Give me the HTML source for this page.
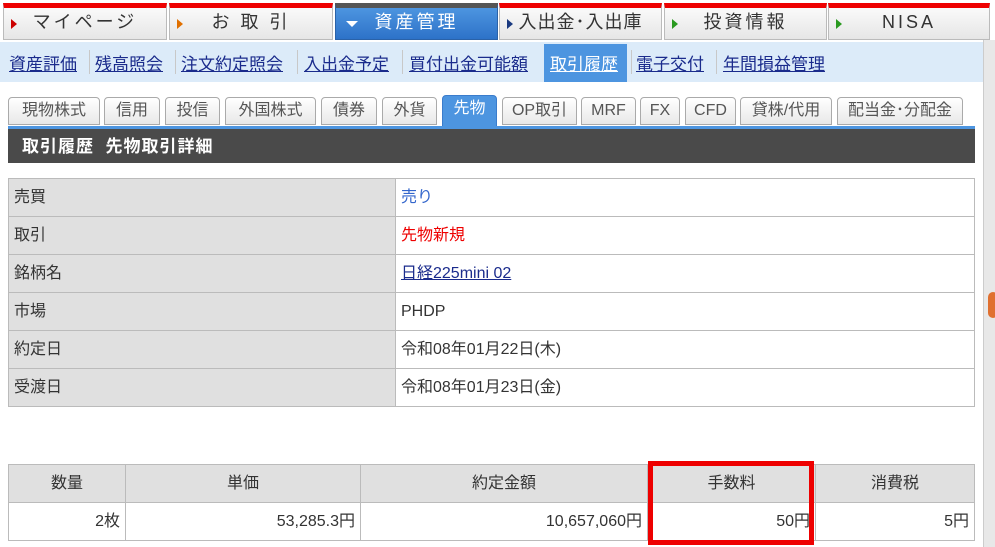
<!DOCTYPE html>
<html><head><meta charset="utf-8"><style>
*{box-sizing:border-box;margin:0;padding:0}
body{width:995px;height:547px;overflow:hidden;background:#fff;font-family:"Liberation Sans","Noto Sans CJK JP",sans-serif;position:relative}
.nav{position:absolute;top:3px;height:37px;border:1px solid #bbb;border-top:5px solid #e00;background:linear-gradient(#fafafa,#e6e6e6);font-size:18px;color:#333;text-align:center;line-height:29px;letter-spacing:3px}
.nav i{position:absolute;left:7px;top:11px;width:0;height:0;border-left:6px solid #c00;border-top:5px solid transparent;border-bottom:5px solid transparent}
.sub{position:absolute;top:42px;left:0;width:983px;height:40px;background:#dcebf9}
.sub a{position:absolute;top:8px;font-size:17px;color:#1a2b8c;text-decoration:underline}
.sep{position:absolute;top:8px;width:1px;height:24px;background:#c8c8c8}
.tab{position:absolute;top:97px;height:28px;border:1px solid #aaa;border-radius:4px 4px 0 0;background:linear-gradient(#fff,#e8e8e8);font-size:16px;color:#555;text-align:center;line-height:26px}
table{position:absolute;border-collapse:collapse;font-size:16px;color:#333}
td{border:1px solid #bbb;height:38px;padding:0 5px;vertical-align:middle;line-height:20px}
.l{background:#e0e0e0}
</style></head><body>
<div class="nav" style="left:3px;width:164px"><i></i>マイページ</div>
<div class="nav" style="left:169px;width:164px"><i style="border-left-color:#e07000"></i>お 取 引</div>
<div class="nav" style="left:335px;width:163px;background:linear-gradient(#4d95e0,#2d72c8);color:#fff;border-color:#2a62a8;border-top-color:#555"><i style="border:6px solid transparent;border-top:6px solid #fff;border-bottom:0;top:13px;left:10px"></i>資産管理</div>
<div class="nav" style="left:499px;width:163px;letter-spacing:1px"><i style="border-left-color:#1a3a80"></i>入出金･入出庫</div>
<div class="nav" style="left:664px;width:163px"><i style="border-left-color:#2a9a20"></i>投資情報</div>
<div class="nav" style="left:828px;width:162px"><i style="border-left-color:#2a9a20"></i>NISA</div>
<div class="sub">
<a style="left:9px">資産評価</a><div class="sep" style="left:89px"></div>
<a style="left:95px">残高照会</a><div class="sep" style="left:175px"></div>
<a style="left:181px">注文約定照会</a><div class="sep" style="left:297px"></div>
<a style="left:304px">入出金予定</a><div class="sep" style="left:402px"></div>
<a style="left:409px">買付出金可能額</a>
<div style="position:absolute;left:544px;top:2px;width:83px;height:38px;background:#4d95e0"></div>
<a style="left:550px;color:#fff">取引履歴</a><div class="sep" style="left:631px"></div>
<a style="left:636px">電子交付</a><div class="sep" style="left:716px"></div>
<a style="left:723px">年間損益管理</a>
</div>
<div style="position:absolute;left:983px;top:40px;width:12px;height:507px;background:#e8e8e8;border-left:1px solid #ccc"></div>
<div style="position:absolute;left:988px;top:292px;width:10px;height:26px;border-radius:6px;background:#e07030"></div>
<div class="tab" style="left:8px;width:92px">現物株式</div>
<div class="tab" style="left:104px;width:56px">信用</div>
<div class="tab" style="left:165px;width:55px">投信</div>
<div class="tab" style="left:225px;width:91px">外国株式</div>
<div class="tab" style="left:321px;width:56px">債券</div>
<div class="tab" style="left:382px;width:55px">外貨</div>
<div class="tab" style="left:442px;top:95px;height:32px;width:55px;background:#4d95e0;color:#fff;border-color:#3a7ccc">先物</div>
<div class="tab" style="left:502px;width:75px">OP取引</div>
<div class="tab" style="left:581px;width:55px">MRF</div>
<div class="tab" style="left:640px;width:40px">FX</div>
<div class="tab" style="left:685px;width:51px">CFD</div>
<div class="tab" style="left:740px;width:92px">貸株/代用</div>
<div class="tab" style="left:837px;width:126px">配当金･分配金</div>
<div style="position:absolute;left:8px;top:126px;width:967px;height:3px;background:#4d95e0"></div>
<div style="position:absolute;left:8px;top:129px;width:967px;height:34px;background:#4a4a4a;color:#fff;font-size:17px;font-weight:bold;line-height:36px;padding-left:14px;letter-spacing:1px">取引履歴&nbsp; 先物取引詳細</div>
<table style="left:8px;top:178px;width:967px">
<tr><td class="l" style="width:387px">売買</td><td style="color:#3366cc">売り</td></tr>
<tr><td class="l">取引</td><td style="color:#e00">先物新規</td></tr>
<tr><td class="l">銘柄名</td><td><span style="color:#1a2b8c;text-decoration:underline">日経225mini 02</span></td></tr>
<tr><td class="l">市場</td><td>PHDP</td></tr>
<tr><td class="l">約定日</td><td>令和08年01月22日(木)</td></tr>
<tr><td class="l">受渡日</td><td>令和08年01月23日(金)</td></tr>
</table>
<table style="left:8px;top:464px;width:967px;text-align:center">
<tr class="l"><td style="width:117px">数量</td><td style="width:235px">単価</td><td style="width:287px">約定金額</td><td style="width:168px">手数料</td><td>消費税</td></tr>
<tr style="text-align:right"><td>2枚</td><td>53,285.3円</td><td>10,657,060円</td><td>50円</td><td>5円</td></tr>
</table>
<div style="position:absolute;left:648px;top:461px;width:166px;height:84px;border:5px solid #e00"></div>
</body></html>
